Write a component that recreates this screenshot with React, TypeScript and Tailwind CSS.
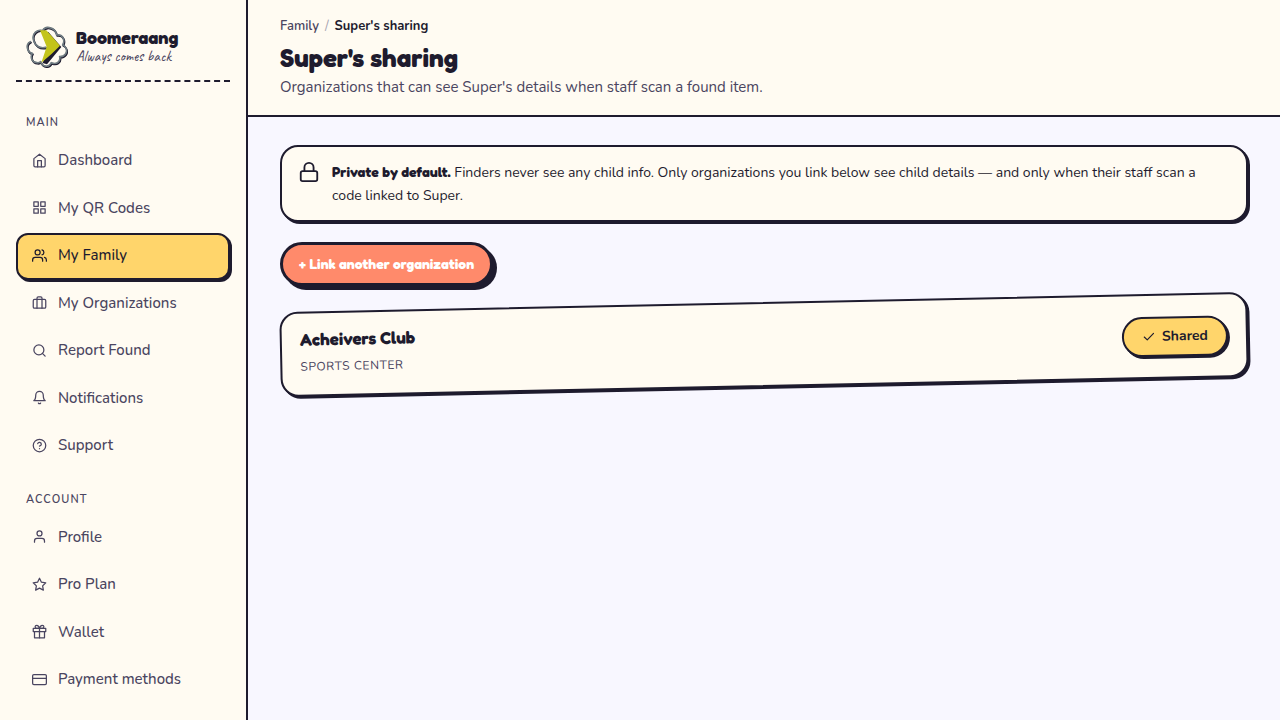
import {
  FiBell,
  FiBriefcase,
  FiCheck,
  FiCreditCard,
  FiGift,
  FiGrid,
  FiHelpCircle,
  FiHome,
  FiLock,
  FiSearch,
  FiStar,
  FiUser,
  FiUsers,
} from 'react-icons/fi';
import type { IconType } from 'react-icons';

type NavItem = {
  label: string;
  icon: IconType;
  active?: boolean;
};

const mainItems: NavItem[] = [
  { label: 'Dashboard', icon: FiHome },
  { label: 'My QR Codes', icon: FiGrid },
  { label: 'My Family', icon: FiUsers, active: true },
  { label: 'My Organizations', icon: FiBriefcase },
  { label: 'Report Found', icon: FiSearch },
  { label: 'Notifications', icon: FiBell },
  { label: 'Support', icon: FiHelpCircle },
];

const accountItems: NavItem[] = [
  { label: 'Profile', icon: FiUser },
  { label: 'Pro Plan', icon: FiStar },
  { label: 'Wallet', icon: FiGift },
  { label: 'Payment methods', icon: FiCreditCard },
];

const CLOUD =
  'M43 95 C35 98 32 108 35 117 C37 125 42 129 49 130 C42 142 48 157 62 158 C67 159 71 158 74 155 C79 171 99 174 106 158 C121 165 135 155 131 140 C146 141 157 126 149 113 C147 109 144 106 140 105 C149 90 139 72 122 75 C118 52 89 45 80 62 C64 57 48 70 52 88 C56 106 70 117 90 112';

const Logo = () => (
  <svg className="size-[42px] shrink-0" viewBox="30 48 126 126" fill="none" aria-hidden="true">
    <path d={CLOUD} transform="translate(2 3)" stroke="#1e1b2e" strokeWidth="5" strokeLinecap="round" strokeLinejoin="round" />
    <path d={CLOUD} stroke="#5f6b72" strokeWidth="5" strokeLinecap="round" strokeLinejoin="round" />
    <path d={CLOUD} stroke="#8f9ba0" strokeWidth="1.5" strokeLinecap="round" strokeLinejoin="round" />
    <path d="M82 66 L97 66 L136 111 L93 163 L80 159 L98 110 Z" fill="#1e1b2e" />
    <path d="M72 61 L91 61 Q112 84 132 107 Q108 132 76 158 L92 110 Z" fill="#c3c41a" />
  </svg>
);

const NavSection = ({ title, items }: { title: string; items: NavItem[] }) => (
  <section>
    <h2 className="mb-[7px] px-2.5 text-[11px] leading-4 font-semibold tracking-widest text-[#4a4560] uppercase">{title}</h2>
    <ul className="flex flex-col gap-px">
      {items.map(({ label, icon: Icon, active }) => (
        <li key={label}>
          <a
            href="#"
            className={`flex items-center gap-[11px] rounded-xl border-2 px-3.5 pt-[9px] pb-[11px] text-[15px] leading-normal font-medium ${
              active
                ? 'border-[#1e1b2e] bg-[#ffd56b] text-[#1e1b2e] shadow-[2px_2px_0_#1e1b2e]'
                : 'border-transparent text-[#4a4560]'
            }`}
          >
            <Icon size={15} />
            {label}
          </a>
        </li>
      ))}
    </ul>
  </section>
);

const Sidebar = () => (
  <aside className="w-62 shrink-0 border-r-2 border-[#1e1b2e] bg-[#fffbf2] px-4 pt-4">
    <div className="mb-[33px] flex items-center gap-2 border-b-2 border-dashed border-[#1e1b2e] px-2.5 pt-2.5 pb-3">
      <Logo />
      <div>
        <p className="font-[Fredoka,Lato,sans-serif] text-lg leading-5 font-black">Boomeraang</p>
        <p className="font-[Caveat,cursive] text-[15px] leading-5 text-[#4a4560]">Always comes back</p>
      </div>
    </div>
    <nav className="flex flex-col gap-[22px]">
      <NavSection title="Main" items={mainItems} />
      <NavSection title="Account" items={accountItems} />
    </nav>
  </aside>
);

const PageHeader = () => (
  <header className="border-b-2 border-[#1e1b2e] bg-[#fffbf2] px-8 py-4">
    <nav aria-label="Breadcrumb" className="flex gap-1.5 text-[13px] leading-5">
      <a href="#" className="font-semibold text-[#4a4560]">Family</a>
      <span className="text-[#a5a2b0]">/</span>
      <span className="font-bold">Super's sharing</span>
    </nav>
    <h1 className="mt-1.5 mb-0.5 font-[Fredoka,Lato,sans-serif] text-[26px] leading-8 font-black">Super's sharing</h1>
    <p className="text-[15px] leading-[23px] text-[#4a4560]">
      Organizations that can see Super's details when staff scan a found item.
    </p>
  </header>
);

const App = () => {
  return (
    <div className="flex h-screen overflow-hidden bg-[#f8f7ff] font-[Nunito,Lato,sans-serif] text-[#1e1b2e]">
      <Sidebar />
      <div className="min-w-0 flex-1">
        <PageHeader />
        <main className="flex flex-col items-start px-8 py-7">
          <div className="flex w-full gap-3 rounded-[18px] border-2 border-[#1e1b2e] bg-[#fffbf2] pt-3.5 pr-6 pb-[13px] pl-4 shadow-[2px_2px_0_#1e1b2e]">
            <FiLock size={22} className="shrink-0" />
            <p className="text-sm leading-[23px]">
              <strong className="font-[Fredoka,Lato,sans-serif] leading-none font-black">Private by default.</strong> Finders never see any
              child info. Only organizations you link below see child details — and only when their staff scan a code linked to Super.
            </p>
          </div>

          <button
            type="button"
            className="mt-5 rounded-full border-3 border-[#1e1b2e] bg-[#ff8a6b] px-4 py-2 font-[Fredoka,Lato,sans-serif] text-sm leading-[22px] font-black text-white shadow-[4px_4px_0_#1e1b2e]"
          >
            + Link another organization
          </button>

          <article className="mt-4 flex w-full -rotate-[1.2deg] items-center justify-between rounded-[18px] border-2 border-[#1e1b2e] bg-[#fffbf2] px-[18px] pt-[17px] pb-4 shadow-[2px_2px_0_#1e1b2e]">
            <div>
              <h2 className="font-[Fredoka,Lato,sans-serif] text-[17px] leading-[18px] font-black">Acheivers Club</h2>
              <p className="mt-1.5 text-xs leading-6 tracking-wider text-[#4a4560] uppercase">Sports center</p>
            </div>
            <button
              type="button"
              className="flex items-center gap-1.5 rounded-full border-2 border-[#1e1b2e] bg-[#ffd56b] px-[18px] py-2 text-sm leading-5 font-bold shadow-[2px_2px_0_#1e1b2e]"
            >
              <FiCheck size={14} />
              Shared
            </button>
          </article>
        </main>
      </div>
    </div>
  );
};

export default App;
